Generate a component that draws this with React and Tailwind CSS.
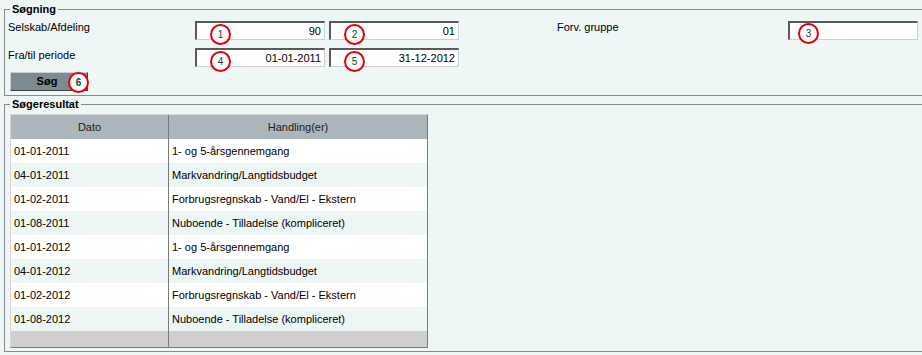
const rows = [
  { dato: '01-01-2011', handling: '1- og 5-årsgennemgang' },
  { dato: '04-01-2011', handling: 'Markvandring/Langtidsbudget' },
  { dato: '01-02-2011', handling: 'Forbrugsregnskab - Vand/El - Ekstern' },
  { dato: '01-08-2011', handling: 'Nuboende - Tilladelse (kompliceret)' },
  { dato: '01-01-2012', handling: '1- og 5-årsgennemgang' },
  { dato: '04-01-2012', handling: 'Markvandring/Langtidsbudget' },
  { dato: '01-02-2012', handling: 'Forbrugsregnskab - Vand/El - Ekstern' },
  { dato: '01-08-2012', handling: 'Nuboende - Tilladelse (kompliceret)' },
];

// red numbered marker laid over the fields
const Marker = ({ n, className }) => (
  <span
    className={`absolute w-[21px] h-[21px] rounded-full border-2 border-[#e30000] bg-white flex items-center justify-center text-[10px] leading-none text-[#333] ${className}`}
  >
    {n}
  </span>
);

const Field = ({ value, n, markerClass = 'left-[13px] top-[1px]' }) => (
  <div className="relative w-[130px] h-[19px] bg-white border-t-2 border-l-2 border-t-[#5a5a5a] border-l-[#5a5a5a] border-b border-r border-b-[#cfcfcf] border-r-[#cfcfcf] flex items-center justify-end pr-[3px]">
    <span className="text-[11px] text-black">{value}</span>
    <Marker n={n} className={markerClass} />
  </div>
);

export default function App() {
  return (
    <div className="w-full h-[355px] overflow-hidden bg-[#eef7f6] text-[11px] text-black font-['Liberation_Sans',Arial,sans-serif]">
      {/* ================= SØGNING ================= */}
      <fieldset className="ml-[4px] mt-[3px] w-[940px] border border-[#8a8a8a] px-[3px] pt-[5px] pb-[4px]">
        <legend className="ml-[2px] px-[2px] font-bold leading-[13px]">Søgning</legend>

        <div className="flex items-start">
          <div className="w-[187px] leading-[13px]">Selskab/Afdeling</div>
          <Field value="90" n="1" />
          <div className="ml-[4px]">
            <Field value="01" n="2" />
          </div>
          <div className="ml-[98px] w-[231px] leading-[13px]">Forv. gruppe</div>
          <Field value="" n="3" markerClass="left-[8px] top-[0px]" />
        </div>

        <div className="flex items-start mt-[8px]">
          <div className="w-[187px] leading-[13px] pt-[1px]">Fra/til periode</div>
          <Field value="01-01-2011" n="4" />
          <div className="ml-[4px]">
            <Field value="31-12-2012" n="5" />
          </div>
        </div>

        <div className="mt-[5px] ml-[2px]">
          <button className="relative w-[78px] h-[19px] bg-[#7d8a92] border-t border-l border-t-[#c9d0d4] border-l-[#c9d0d4] border-b border-r border-b-[#3c4346] border-r-[#3c4346] font-bold text-[11px] text-black flex items-center justify-center pr-[4px]">
            Søg
            <Marker n="6" className="left-[57px] top-[-1px]" />
          </button>
        </div>
      </fieldset>

      {/* ================= SØGERESULTAT ================= */}
      <fieldset className="ml-[4px] mt-[2px] w-[940px] border border-[#8a8a8a] px-[3px] pt-[3px] pb-[3px]">
        <legend className="ml-[2px] px-[2px] font-bold leading-[13px]">Søgeresultat</legend>

        <div className="ml-[2px] w-[418px] border-t border-l border-t-[#d6d6d6] border-l-[#d6d6d6] border-b border-r border-b-[#7a7a7a] border-r-[#7a7a7a]">
          <div className="flex h-[24px] bg-[#adb5bd] text-[#1c1c1c]">
            <div className="w-[158px] border-r border-[#7a7a7a] flex items-center justify-center">Dato</div>
            <div className="flex-1 flex items-center justify-center">Handling(er)</div>
          </div>

          {rows.map((r, i) => (
            <div key={i} className={`flex h-[24px] ${i % 2 === 0 ? 'bg-white' : 'bg-[#eef6f5]'}`}>
              <div className="w-[158px] border-r border-[#7a7a7a] flex items-center pl-[3px]">{r.dato}</div>
              <div className="flex-1 flex items-center pl-[3px]">{r.handling}</div>
            </div>
          ))}

          <div className="flex h-[16px] bg-[#cfcfcf]">
            <div className="w-[158px] border-r border-[#7a7a7a]"></div>
            <div className="flex-1"></div>
          </div>
        </div>
      </fieldset>
    </div>
  );
}
